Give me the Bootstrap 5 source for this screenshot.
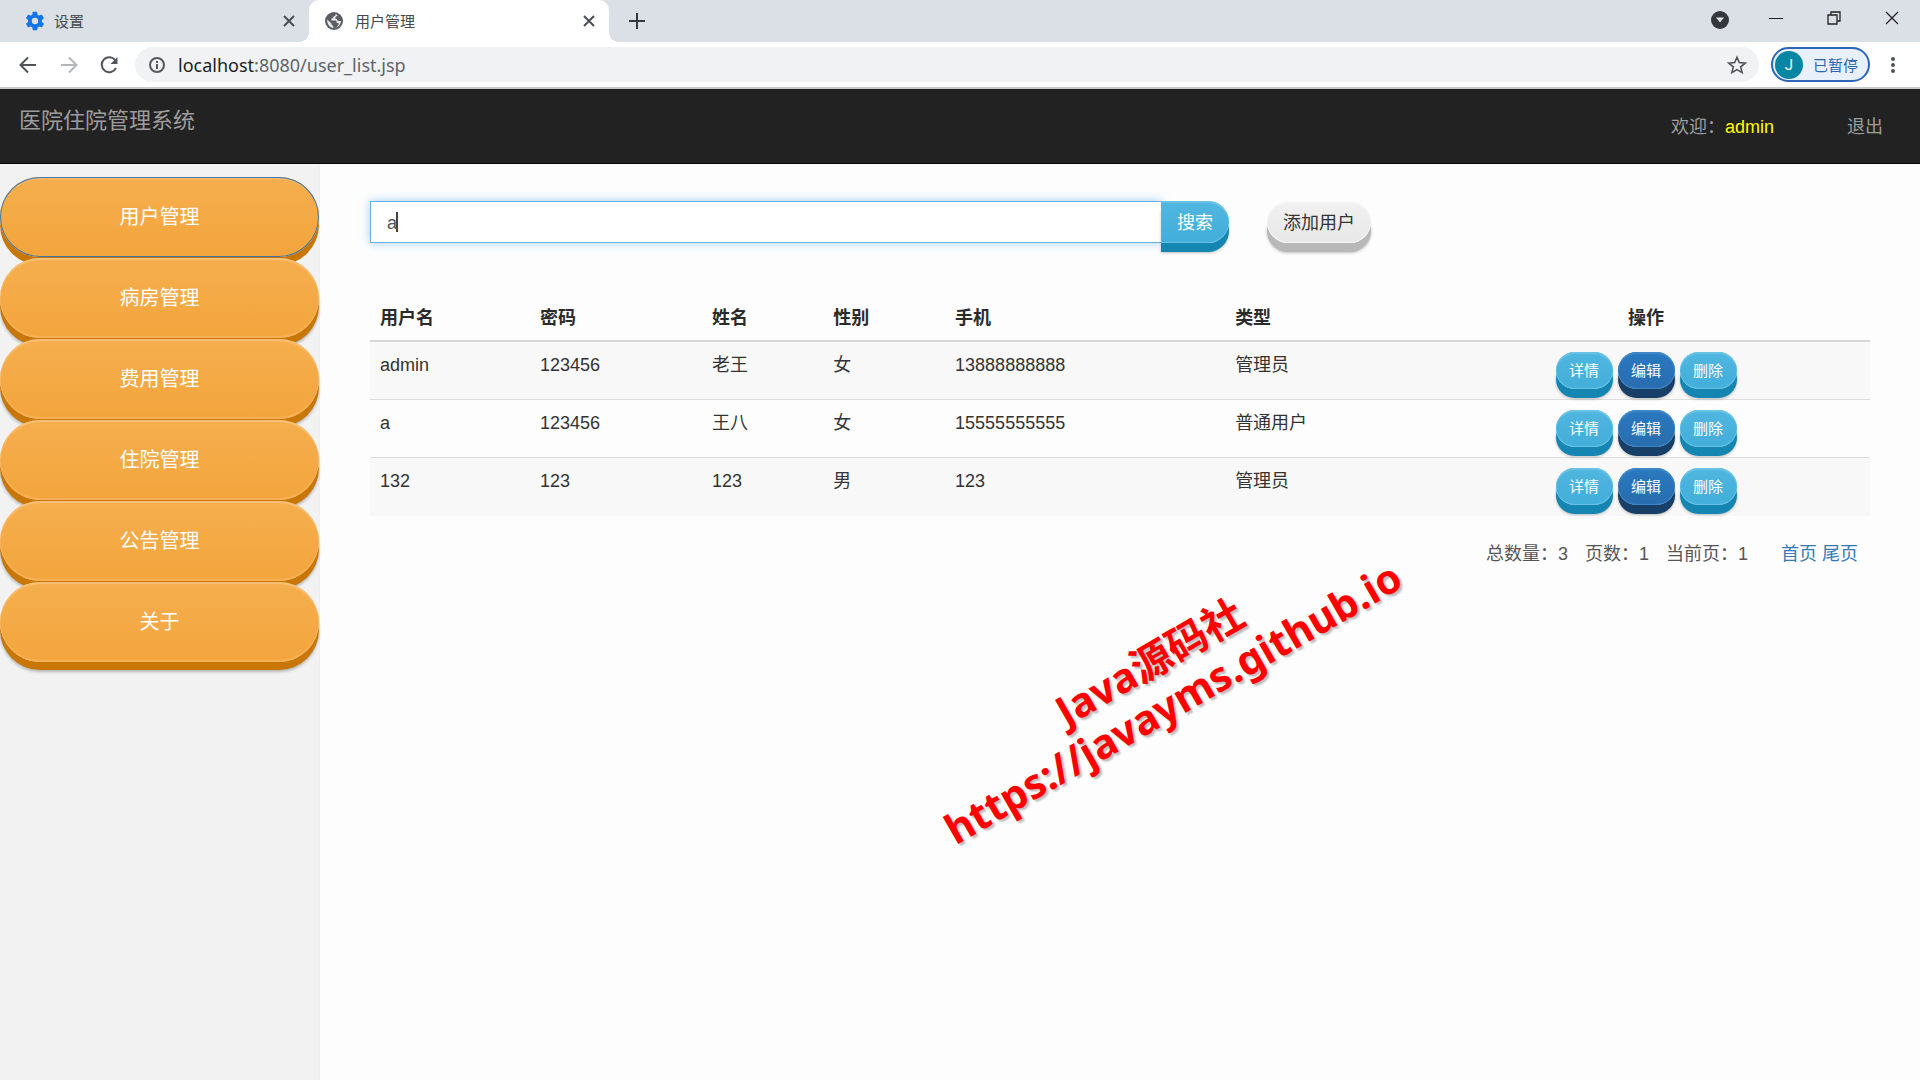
<!DOCTYPE html>
<html lang="zh-CN">
<head>
<meta charset="utf-8">
<meta name="viewport" content="width=device-width, initial-scale=1">
<title>用户管理</title>
<link rel="stylesheet" href="https://cdn.jsdelivr.net/npm/bootstrap@5.3.0/dist/css/bootstrap.min.css">
<style>
  body { font-family: "Liberation Sans", "Noto Sans CJK SC", sans-serif; font-size: 18px; line-height: 24px; color: #333; background: #fdfdfd; }
  svg { display: block; flex: none; }
  /* browser frame */
  .browser-ui { font-family: "Noto Sans", "Noto Sans CJK SC", sans-serif; }
  .tab-strip { height: 42px; background: #dbdfe6; }
  .win-tab { font-size: 15px; color: #45494d; padding: 0 14px 0 24px; height: 42px; }
  .tab-first { width: 309px; }
  .tab-active { width: 300px; padding-left: 16px; background: #fff; border-radius: 10px 10px 0 0; position: relative; }
  .tab-active::before, .tab-active::after { content: ""; position: absolute; bottom: 0; width: 10px; height: 10px; }
  .tab-active::before { left: -10px; background: radial-gradient(circle at 0 0, transparent 10px, #fff 10px); }
  .tab-active::after { right: -10px; background: radial-gradient(circle at 100% 0, transparent 10px, #fff 10px); }
  .icon-btn { border: 0; background: none; padding: 0; color: #4a4d51; }
  .win-controls { gap: 36px; padding: 0 21px 6px 0; color: #222; }
  .tool-row { height: 47px; background: #fff; padding: 0 20px 0 17px; border-bottom: 2px solid #c9c9c9; }
  .omnibox { height: 35px; border-radius: 18px; background: #f0f2f4; padding: 0 12px 0 13px; color: #55595e; }
  .url-text { font-size: 18px; color: #60646a; text-decoration: none; }
  .url-host { color: #1d1e20; }
  .profile-chip { height: 35px; border: 2px solid #2b66b9; border-radius: 18px; background: #e8f0fb; color: #2b66b9; font-size: 15px; padding: 0 10px 0 2px; gap: 10px; }
  .profile-letter { width: 28px; height: 28px; border-radius: 50%; background: #0786a3; color: #fff; font-family: Roboto, sans-serif; font-size: 15px; }
  /* application header */
  .app-bar { min-height: 75px; background: #222; color: #9d9d9d; padding: 0 37px 0 19px; border-bottom: 1px solid #080808; }
  .app-bar .navbar-brand { font-size: 22px; color: #9d9d9d; padding: 0 0 10px; margin: 0; line-height: 30px; }
  .app-links { gap: 73px; padding-top: 2px; }
  .app-links a { color: #9d9d9d; text-decoration: none; }
  .app-user { color: #ff0; }
  /* side menu */
  .side-menu { width: 320px; background: #f2f2f2; border-right: 1px solid #eee; padding-top: 13px; }
  .side-menu .nav-link { width: 319px; height: 80px; margin-bottom: 1px; padding: 0; border-radius: 40px; color: #fff; font-size: 20px; line-height: 80px; text-align: center;
    background: linear-gradient(#f5ae4e, #f3a53c);
    box-shadow: inset 0 2px 1px #f8c078, inset 0 -2px 1px #f7b157, 0 8px 0 #c87706, 0 10px 3px rgba(0,0,0,.25); position: relative; }
  .side-menu .nav-link.active { box-shadow: inset 0 0 0 1px #3f76a5, inset 0 2px 1px #f8c078, 0 8px 0 #c87706; }
  /* raised pill buttons */
  .pill-3d { --face-a: #50b6df; --face-b: #42aeda; --edge: #1586b2; --rim: #6ac3e6; border: 0; color: #fff; background: linear-gradient(var(--face-a), var(--face-b));
    box-shadow: inset 0 2px 1px var(--rim), inset 0 -1px 1px var(--rim), 0 9px 0 var(--edge), 0 10px 3px rgba(0,0,0,.25); }
  .pill-3d:hover { color: #fff; }
  .pill-lg { height: 42px; padding: 0 16px; font-size: 18px; line-height: 44px; border-radius: 21px; }
  .pill-sm { width: 57px; height: 37px; padding: 0; font-size: 15px; line-height: 37px; border-radius: 19px; }
  .pill-blue { --face-a: #2a79c1; --face-b: #286cae; --edge: #173f67; --rim: #3f88c8; }
  .pill-grey, .pill-grey:hover { --face-a: #f1f1f1; --face-b: #e7e7e7; --edge: #b8b8b8; --rim: #f8f8f8; color: #333; }
  .op-set { gap: 5px; }
  .main-area { padding: 37px 50px 0; }
  .search-group { width: 859px; }
  .search-row { gap: 38px; }
  .search-group .form-control { height: 42px; font-size: 18px; color: #555; padding: 2px 16px 0; border: 1px solid #66afe9; border-radius: 0; box-shadow: 0 0 9px rgba(102,175,233,.6);
    background: #fff linear-gradient(#444, #444) 25px 50% / 2px 20px no-repeat; }
  .search-group .btn { border-radius: 0 21px 21px 0; margin: 0; }
  .user-table { --bs-table-striped-bg: #f8f8f8; --bs-table-color: #333; --bs-table-striped-color: #333; --bs-table-bg: transparent; table-layout: fixed; border-color: #ddd; margin: 50px 0 0; }
  .user-table th { padding: 10px; height: 48px; color: #2b2b2b; }
  .user-table thead tr { border-bottom: 2px solid #d8d8d8; }
  .user-table td { padding: 10px; height: 58px; line-height: 26px; }
  .user-table tbody tr:last-child td { border-bottom: 0; }
  .pager-line { margin-top: 26px; padding-right: 12px; gap: 17px; color: #555; }
  .pager-line a { color: #337ab7; text-decoration: none; }
  /* diagonal overlay */
  .stamp { position: absolute; left: 1161px; top: 682px; transform: translate(-50%, -50%) rotate(-30deg); font-family: "Noto Sans", "Noto Sans CJK SC", sans-serif; font-weight: 700; font-size: 41px; line-height: 47px; color: #f00; text-align: center; white-space: nowrap; text-shadow: 1px 3px 2px rgba(0,0,0,.25); pointer-events: none; }
</style>
</head>
<body class="d-flex flex-column min-vh-100">

<div class="browser-ui">
  <div class="tab-strip d-flex align-items-center">
    <div class="win-tab tab-first d-flex align-items-center">
      <svg width="22" height="22" viewBox="0 0 24 24" fill="#1473e8"><path d="M19.4 13c0-.3.1-.6.1-1s0-.7-.1-1l2.1-1.600c.2-.2.3-.4.1-.6l-2-3.500c-.1-.2-.4-.3-.6-.2l-2.500 1c-.5-.4-1.100-.7-1.700-1L14.400 2.400c0-.2-.2-.4-.5-.4h-4c-.2 0-.4.200-.5.400L9.100 5.100c-.6.2-1.200.6-1.700 1l-2.500-1c-.2-.1-.5 0-.6.200l-2 3.500c-.1.200-.1.500.1.600L4.500 11c0 .3-.1.700-.1 1s0 .7.100 1l-2.100 1.600c-.2.200-.2.400-.1.600l2 3.500c.1.200.4.300.6.200l2.500-1c.5.400 1.100.7 1.700 1l.4 2.700c0 .200.200.400.500.400h4c.2 0 .5-.2.5-.4l.4-2.700c.6-.2 1.200-.6 1.700-1l2.500 1c.2.100.5 0 .6-.2l2-3.500c.1-.2.1-.5-.1-.6L19.400 13zM12 15.500a3.500 3.500 0 1 1 0-7 3.500 3.500 0 0 1 0 7z"/></svg>
      <span class="ms-2">设置</span>
      <button class="icon-btn ms-auto" aria-label="关闭"><svg width="12" height="12" viewBox="0 0 12 12" stroke="currentColor" stroke-width="2"><path d="M1 1l10 10M11 1L1 11"/></svg></button>
    </div>
    <div class="win-tab tab-active d-flex align-items-center">
      <svg width="18" height="18" viewBox="0 0 18 18"><circle cx="9" cy="9" r="9" fill="#5a5e63"/><path d="M10.500 2.200c.3 1.300-.6 1.900-2 2.200-.3 1.400-.9 1.900-2.100 2.200v1.800h4.300c1 .6 1 1.300 1 2.500h1.900v1.600l-2.300 2.900c-.9.500-2 .6-3.100.4v-1.900c-1.300-.2-1.700-.9-1.800-2.300L2.100 7.400C2 11 4 15.700 9 15.900c4-.1 6.800-3.200 6.900-6.900h-2.600c-.9-.4-1.300-1-1.300-2.100h-1.600V5.300l1.800-1.600.5-.8z" fill="#e8eaed"/></svg>
      <span class="ms-2 ps-1">用户管理</span>
      <button class="icon-btn ms-auto" aria-label="关闭"><svg width="12" height="12" viewBox="0 0 12 12" stroke="currentColor" stroke-width="2"><path d="M1 1l10 10M11 1L1 11"/></svg></button>
    </div>
    <button class="icon-btn ms-3 ps-1" aria-label="新标签页"><svg width="16" height="16" viewBox="0 0 16 16" stroke="#34373b" stroke-width="2"><path d="M8 0v16M0 8h16"/></svg></button>
    <div class="win-controls ms-auto d-flex align-items-center">
      <button class="icon-btn pt-1" aria-label="搜索标签页"><svg width="18" height="18" viewBox="0 0 18 18"><circle cx="9" cy="9" r="9" fill="#34383d"/><path d="M5 6.500h8l-4 5z" fill="#e3e6ea"/></svg></button>
      <button class="icon-btn ps-1" aria-label="最小化"><svg width="14" height="14" viewBox="0 0 14 14"><path d="M0 7.500h14" stroke="#222"/></svg></button>
      <button class="icon-btn ps-2" aria-label="还原"><svg width="14" height="14" viewBox="0 0 14 14" fill="none" stroke="#222" stroke-width="1.300"><path d="M1 4h9v9H1zM4 4V1h9v9h-3"/></svg></button>
      <button class="icon-btn ps-2" aria-label="关闭窗口"><svg width="14" height="14" viewBox="0 0 14 14" stroke="#222" stroke-width="1.300"><path d="M1 1l12 12M13 1L1 13"/></svg></button>
    </div>
  </div>

  <div class="tool-row d-flex align-items-center">
    <button class="icon-btn" aria-label="后退"><svg width="22" height="22" viewBox="0 0 22 22" fill="none" stroke="#505459" stroke-width="2"><path d="M19 11H4M11 3.500L3.500 11l7.500 7.500"/></svg></button>
    <button class="icon-btn ms-3 ps-1" aria-label="前进"><svg width="20" height="22" viewBox="1 0 20 22" fill="none" stroke="#b4b6b9" stroke-width="2"><path d="M3 11h15M11 3.500l7.500 7.500-7.500 7.500"/></svg></button>
    <button class="icon-btn ms-3 ps-1" aria-label="刷新"><svg width="20" height="22" viewBox="1 0 20 22"><path d="M17.500 6.500A7.500 7.500 0 1 0 18 14" fill="none" stroke="#505459" stroke-width="2"/><path d="M19.500 3v7H12.500z" fill="#505459"/></svg></button>
    <div class="omnibox flex-grow-1 d-flex align-items-center ms-3 me-2">
      <svg width="18" height="18" viewBox="0 0 18 18" fill="none" stroke="currentColor" stroke-width="2"><circle cx="9" cy="9" r="7"/><path d="M9 8v5M9 5v2"/></svg>
      <a class="url-text ms-2 ps-1" href="#"><span class="url-host">localhost</span>:8080/user_list.jsp</a>
      <button class="icon-btn ms-auto" aria-label="收藏"><svg width="20" height="20" viewBox="0 0 20 20" fill="none" stroke="#505459" stroke-width="1.600"><path d="M10 2.200l2.300 5.400 5.900.5-4.500 3.800 1.400 5.700-5.100-3-5.100 3 1.400-5.700-4.500-3.800 5.900-.5z"/></svg></button>
    </div>
    <button class="profile-chip d-flex align-items-center ms-1"><span class="profile-letter d-flex align-items-center justify-content-center">J</span>已暂停</button>
    <button class="icon-btn ms-3" aria-label="菜单"><svg width="14" height="18" viewBox="0 0 14 18" fill="#505459"><circle cx="7" cy="3" r="2"/><circle cx="7" cy="9" r="2"/><circle cx="7" cy="15" r="2"/></svg></button>
  </div>
</div>

<nav class="navbar app-bar">
  <a class="navbar-brand" href="#">医院住院管理系统</a>
  <div class="app-links d-flex">
    <span>欢迎：<span class="app-user">admin</span></span>
    <a href="#">退出</a>
  </div>
</nav>

<div class="d-flex flex-grow-1">
  <aside class="side-menu flex-shrink-0">
    <nav class="nav flex-column">
      <a class="nav-link active" href="#">用户管理</a>
      <a class="nav-link" href="#">病房管理</a>
      <a class="nav-link" href="#">费用管理</a>
      <a class="nav-link" href="#">住院管理</a>
      <a class="nav-link" href="#">公告管理</a>
      <a class="nav-link" href="#">关于</a>
    </nav>
  </aside>

  <main class="main-area flex-grow-1">
    <div class="search-row d-flex align-items-start">
      <form class="search-group input-group">
        <input type="text" class="form-control" value="a" aria-label="用户名">
        <button type="button" class="btn pill-3d pill-lg">搜索</button>
      </form>
      <button type="button" class="btn pill-3d pill-lg pill-grey">添加用户</button>
    </div>

    <table class="table table-striped user-table">
      <colgroup><col style="width:10.67%"><col style="width:11.47%"><col style="width:8.07%"><col style="width:8.13%"><col style="width:18.67%"><col style="width:13.13%"><col></colgroup>
      <thead>
        <tr><th>用户名</th><th>密码</th><th>姓名</th><th>性别</th><th>手机</th><th>类型</th><th class="text-center">操作</th></tr>
      </thead>
      <tbody>
        <tr><td>admin</td><td>123456</td><td>老王</td><td>女</td><td>13888888888</td><td>管理员</td>
          <td><div class="d-flex justify-content-center op-set"><button class="btn pill-3d pill-sm">详情</button><button class="btn pill-3d pill-sm pill-blue">编辑</button><button class="btn pill-3d pill-sm">删除</button></div></td></tr>
        <tr><td>a</td><td>123456</td><td>王八</td><td>女</td><td>15555555555</td><td>普通用户</td>
          <td><div class="d-flex justify-content-center op-set"><button class="btn pill-3d pill-sm">详情</button><button class="btn pill-3d pill-sm pill-blue">编辑</button><button class="btn pill-3d pill-sm">删除</button></div></td></tr>
        <tr><td>132</td><td>123</td><td>123</td><td>男</td><td>123</td><td>管理员</td>
          <td><div class="d-flex justify-content-center op-set"><button class="btn pill-3d pill-sm">详情</button><button class="btn pill-3d pill-sm pill-blue">编辑</button><button class="btn pill-3d pill-sm">删除</button></div></td></tr>
      </tbody>
    </table>

    <div class="pager-line d-flex justify-content-end">
      <span>总数量：3</span><span>页数：1</span><span>当前页：1</span>
      <span class="ms-3"><a href="#">首页</a> <a href="#">尾页</a></span>
    </div>
  </main>
</div>

<div class="stamp">Java源码社<br>https://javayms.github.io</div>

<script src="https://cdn.jsdelivr.net/npm/bootstrap@5.3.0/dist/js/bootstrap.bundle.min.js"></script>
</body>
</html>
